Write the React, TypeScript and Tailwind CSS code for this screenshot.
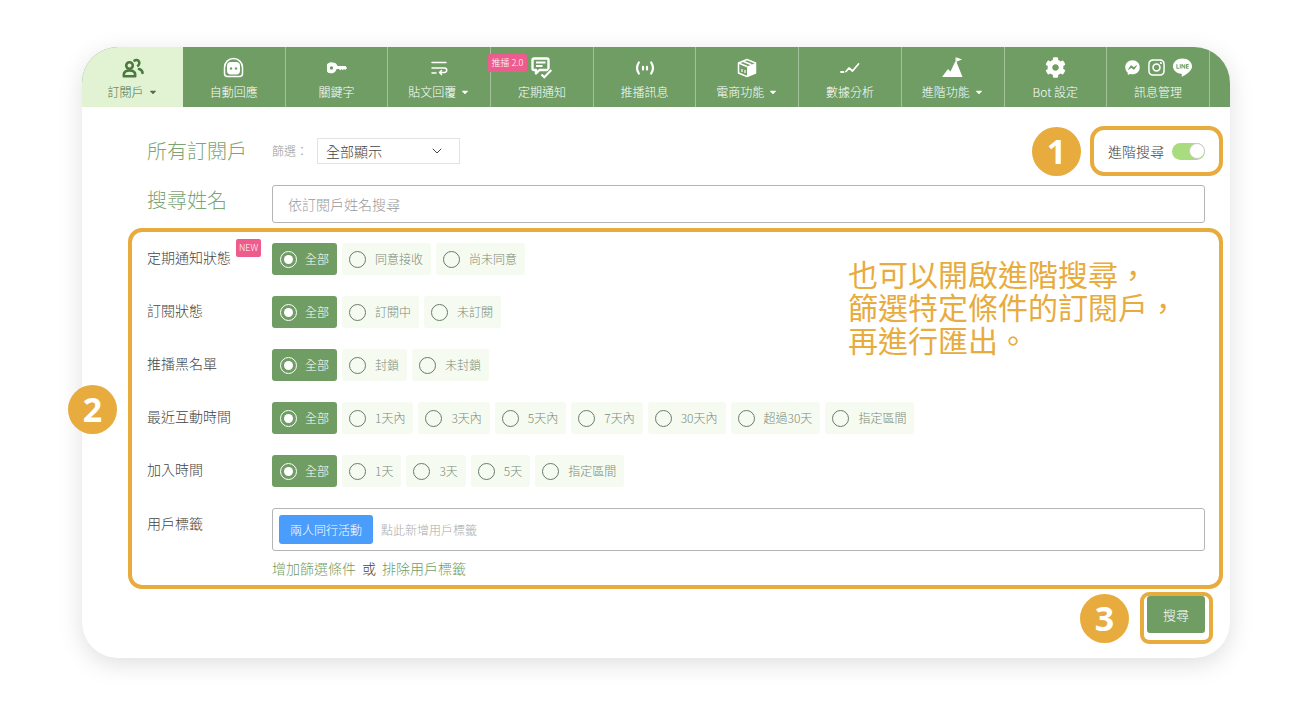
import type { ReactNode } from "react";
import { FaCaretDown, FaCog, FaFacebookMessenger, FaInstagram } from "react-icons/fa";
import { SiLine } from "react-icons/si";
import { ChevronDown } from "lucide-react";

const font = "font-['Noto_Sans_CJK_TC','Noto_Sans',sans-serif]";

const UsersIcon = () => (
  <svg width="22" height="20" viewBox="0 0 22 20" fill="none" stroke="#4a7a40" strokeWidth="2.600">
    <circle cx="7.500" cy="7.500" r="3.300" />
    <path d="M1.800 18.200v-1.500c0-2.700 2.500-4.200 5.700-4.200s5.700 1.500 5.700 4.200v1.500z" strokeLinejoin="round" />
    <path d="M12.500 2.600a3 3 0 1 1 3.500 5M17 11c2 .5 3.500 1.700 3.500 4" strokeLinecap="round" />
  </svg>
);

const BotIcon = () => (
  <svg width="21" height="21" viewBox="0 0 21 21" fill="none">
    <path d="M1.500 10.500a9 9 0 0 1 18 0v6a3 3 0 0 1-3 3h-12a3 3 0 0 1-3-3z" stroke="#fff" strokeWidth="1.500" />
    <rect x="4" y="5" width="13" height="12.500" rx="4" fill="#fff" />
    <circle cx="8" cy="11.500" r="1.200" fill="#6f9d64" />
    <circle cx="13" cy="11.500" r="1.200" fill="#6f9d64" />
  </svg>
);

const KeyIcon = () => (
  <svg width="20" height="12" viewBox="0 0 20 12" fill="#fff">
    <path
      d="M5.500.5a5.500 5.500 0 0 1 5.100 3.400H18.500l1.500 2-1.700 2.200-1.300-1.100-1.200 1.300-1.300-1.300-1.200 1.300-1.400-1.300h-2.300A5.500 5.500 0 1 1 5.500.5zM4.500 4.300a1.700 1.700 0 1 0 0 3.400 1.700 1.700 0 0 0 0-3.400z"
      fillRule="evenodd"
    />
  </svg>
);

const RepostIcon = () => (
  <svg width="18" height="16" viewBox="0 0 18 16" fill="none" stroke="#fff" strokeWidth="1.500" strokeLinecap="round" strokeLinejoin="round">
    <path d="M2 2.500h14M2 8h12.500a2.200 2.200 0 0 1 0 4.500H9.500M11.500 10.500l-2 2 2 2M2 13h4" />
  </svg>
);

const NotifyIcon = () => (
  <svg width="22" height="22" viewBox="0 0 22 22" fill="none">
    <path d="M3 1.500h13a1.500 1.500 0 0 1 1.500 1.500v8.500A1.500 1.500 0 0 1 16 13H8.500l-3.500 3.500V13H3a1.500 1.500 0 0 1-1.500-1.500V3A1.500 1.500 0 0 1 3 1.500z" stroke="#fff" strokeWidth="2.400" strokeLinejoin="round" />
    <path d="M5 5.500h9.500M5 9h6.500" stroke="#fff" strokeWidth="2" />
    <path d="M10.500 17.500l2.800 2.800 7-7.300" stroke="#6f9d64" strokeWidth="4" />
    <path d="M10.500 17.500l2.800 2.800 7-7.300" stroke="#fff" strokeWidth="2.200" />
  </svg>
);

const BroadcastIcon = () => (
  <svg width="20" height="16" viewBox="0 0 20 16" fill="none" stroke="#fff" strokeWidth="2.200" strokeLinecap="round">
    <path d="M3.800 2.500C1.500 6 1.500 10 3.800 13.500M16.200 2.500c2.300 3.500 2.300 7.500 0 11" />
    <path d="M8 6.800v2.800M12 6.800v2.800" />
  </svg>
);

const BoxIcon = () => (
  <svg width="20" height="20" viewBox="0 0 20 20" fill="none" stroke="#fff" strokeWidth="1.500" strokeLinejoin="round">
    <path d="M10 1.500 18.500 5v10L10 18.500 1.500 15V5z" />
    <path d="M10 8.500 18.500 5V15L10 18.500z" fill="#fff" stroke="none" />
    <path d="M1.500 5 10 8.500" />
    <path d="M6 3.200 14.500 6.700" />
    <path d="M5 11v3M8 12v3" strokeWidth="1.200" />
  </svg>
);

const TrendIcon = () => (
  <svg width="20" height="12" viewBox="0 0 20 12" fill="none" stroke="#fff" strokeWidth="1.800" strokeLinecap="round" strokeLinejoin="round">
    <path d="M1 10h2.500M6 9.500l3-3.500 3.500 3L18.500 2" />
  </svg>
);

const MountainIcon = () => (
  <svg width="21" height="21" viewBox="0 0 21 21" fill="#fff">
    <path d="M0 20 6 12l2.500 2.500L13 5h1.500l6 15z" />
    <path d="M13.500 0.500h1.300V7h-1.300z" />
    <path d="M14.800 0.500 20 2.500l-5.200 2z" />
  </svg>
);

const tabs: { label: string; icon: ReactNode; caret?: boolean }[] = [
  { label: "訂閱戶", icon: <UsersIcon />, caret: true },
  { label: "自動回應", icon: <BotIcon /> },
  { label: "關鍵字", icon: <KeyIcon /> },
  { label: "貼文回覆", icon: <RepostIcon />, caret: true },
  { label: "定期通知", icon: <NotifyIcon /> },
  { label: "推播訊息", icon: <BroadcastIcon /> },
  { label: "電商功能", icon: <BoxIcon />, caret: true },
  { label: "數據分析", icon: <TrendIcon /> },
  { label: "進階功能", icon: <MountainIcon />, caret: true },
  { label: "Bot 設定", icon: <FaCog size={21} color="#fff" /> },
  {
    label: "訊息管理",
    icon: (
      <span className="flex items-center gap-[7px]">
        <FaFacebookMessenger size={15} color="#fff" />
        <FaInstagram size={19} color="#fff" />
        <SiLine size={19} color="#fff" />
      </span>
    ),
  },
];

const NavTab = ({ label, icon, caret, active }: { label: string; icon: ReactNode; caret?: boolean; active: boolean }) => (
  <div
    className={`flex h-full flex-col items-center shrink-0 ${
      active ? "w-[101px] bg-[#e1f3d3] text-[#4f6f49]" : "w-[102.7px] border-r border-[#a3c29b] text-white"
    }`}
  >
    <div className="flex h-[25px] mt-[8px] items-center justify-center">{icon}</div>
    <div className="flex items-center gap-1 mt-[2px] text-xs leading-[20px] font-light">
      {label}
      {caret && <FaCaretDown size={10} />}
    </div>
  </div>
);

const Radio = ({ on }: { on?: boolean }) => (
  <span
    className={`flex h-[17px] w-[17px] shrink-0 items-center justify-center rounded-full border ${
      on ? "border-white" : "border-[#6b7a68]"
    }`}
  >
    {on && <span className="h-[9px] w-[9px] rounded-full bg-white" />}
  </span>
);

const rows: { label: string; options: string[]; isNew?: boolean }[] = [
  { label: "定期通知狀態", options: ["同意接收", "尚未同意"], isNew: true },
  { label: "訂閱狀態", options: ["訂閱中", "未訂閱"] },
  { label: "推播黑名單", options: ["封鎖", "未封鎖"] },
  { label: "最近互動時間", options: ["1天內", "3天內", "5天內", "7天內", "30天內", "超過30天", "指定區間"] },
  { label: "加入時間", options: ["1天", "3天", "5天", "指定區間"] },
];

const FilterRow = ({ label, options, isNew }: { label: string; options: string[]; isNew?: boolean }) => (
  <div className="flex h-[53px] items-start">
    <div className="relative w-[125px] shrink-0 text-sm leading-[28px] font-light text-[#444]">
      {label}
      {isNew && (
        <span className="absolute left-[89px] -top-[4px] h-[18px] w-[25px] rounded-[2px] bg-[#ee5c8e] text-center text-[9px] leading-[18px] font-light text-white">
          NEW
        </span>
      )}
    </div>
    <div className="flex gap-[5px]">
      <div className="flex h-[32px] w-[65px] items-center gap-[8px] rounded-[3px] bg-[#6f9d64] pl-[8px] text-xs font-light text-white">
        <Radio on />
        全部
      </div>
      {options.map((opt) => (
        <div key={opt} className="flex h-[32px] items-center gap-[9px] rounded-[3px] bg-[#f5fbf1] pl-[7px] pr-[8px] text-xs font-light text-[#7c8a78]">
          <Radio />
          {opt}
        </div>
      ))}
    </div>
  </div>
);

const Marker = ({ n, className }: { n: number; className: string }) => (
  <div
    className={`absolute flex h-[49px] w-[49px] items-center justify-center rounded-full bg-[#e8ab3e] text-[34px] font-bold text-white font-['Open_Sans',sans-serif] ${className}`}
  >
    {n}
  </div>
);

const App = () => (
  <div className={`relative h-[715px] w-[1311px] overflow-hidden bg-white pl-[82px] pt-[47px] ${font}`}>
    <div className="flex h-[611px] w-[1148px] flex-col overflow-hidden rounded-[36px] bg-white shadow-[0_6px_24px_rgba(0,0,0,0.13)]">
      <nav className="flex h-[60px] shrink-0 bg-[#6f9d64]">
        {tabs.map((t, i) => (
          <NavTab key={t.label} {...t} active={i === 0} />
        ))}
      </nav>

      <div className="flex flex-col pl-[65px] pr-[25px] pt-[29px]">
        <div className="flex h-[30px] items-center">
          <h1 className="w-[125px] shrink-0 text-xl font-light text-[#7da574]">所有訂閱戶</h1>
          <span className="w-[45px] shrink-0 text-xs font-light text-[#999]">篩選：</span>
          <div className="flex h-[26px] w-[143px] items-center justify-between border border-[#e3e3e3] pl-[8px] pr-[14px] text-sm font-light text-[#444]">
            全部顯示
            <ChevronDown size={16} strokeWidth={1.5} />
          </div>
          <div className="ml-auto flex items-center gap-[8px] text-sm font-light text-[#444]">
            進階搜尋
            <span className="flex h-[17px] w-[33px] items-center justify-end rounded-full bg-[#a9dc7f]">
              <span className="h-[16px] w-[16px] rounded-full border border-[#ccc] bg-white" />
            </span>
          </div>
        </div>

        <div className="mt-[19px] flex items-center">
          <h2 className="mb-[8px] w-[125px] shrink-0 text-xl font-light text-[#7da574]">搜尋姓名</h2>
          <div className="flex h-[38px] flex-1 items-center rounded-[3px] border border-[#b5b5b5] pl-[15px] text-sm font-light text-[#999]">
            依訂閱戶姓名搜尋
          </div>
        </div>

        <div className="mt-[20px] flex flex-col">
          {rows.map((r) => (
            <FilterRow key={r.label} {...r} />
          ))}
          <div className="flex items-start">
            <div className="w-[125px] shrink-0 text-sm leading-[30px] font-light text-[#444]">用戶標籤</div>
            <div className="flex flex-1 flex-col">
              <div className="flex h-[43px] items-center gap-[8px] rounded-[3px] border border-[#b5b5b5] pl-[6px] text-xs font-light text-[#aaa]">
                <span className="flex h-[29px] w-[94px] items-center justify-center rounded-[3px] bg-[#4a9dfb] text-xs text-white">
                  兩人同行活動
                </span>
                點此新增用戶標籤
              </div>
              <div className="mt-[6px] flex gap-[6px] text-sm leading-[22px] font-light text-[#6f9d64]">
                <span>增加篩選條件</span>
                <span className="text-[#444]">或</span>
                <span>排除用戶標籤</span>
              </div>
            </div>
          </div>
        </div>

        <div className="mt-[17px] flex justify-end">
          <button className="h-[37px] w-[58px] shrink-0 rounded-[3px] bg-[#6f9d64] text-[13px] font-light text-white">搜尋</button>
        </div>
      </div>
    </div>

    <div className="absolute left-[1090px] top-[126px] h-[50px] w-[133px] rounded-[14px] border-4 border-[#e8ab3e]" />
    <div className="absolute left-[128px] top-[228px] h-[361px] w-[1095px] rounded-[14px] border-4 border-[#e8ab3e]" />
    <div className="absolute left-[1140px] top-[592px] h-[52px] w-[73px] rounded-[9px] border-4 border-[#e8ab3e]" />
    <Marker n={1} className="left-[1032px] top-[127px]" />
    <Marker n={2} className="left-[68px] top-[385px]" />
    <Marker n={3} className="left-[1080px] top-[594px]" />
    <p className="absolute left-[848px] top-[257px] text-[30px] leading-[33px] text-[#e8ab3e]">
      也可以開啟進階搜尋，
      <br />
      篩選特定條件的訂閱戶，
      <br />
      再進行匯出。
    </p>
    <span className="absolute left-[488px] top-[54px] h-[18px] w-[39px] rounded-[2px] bg-[#ee5c8e] text-center text-[9px] leading-[18px] font-light text-white">
      推播 2.0
    </span>
  </div>
);

export default App;
